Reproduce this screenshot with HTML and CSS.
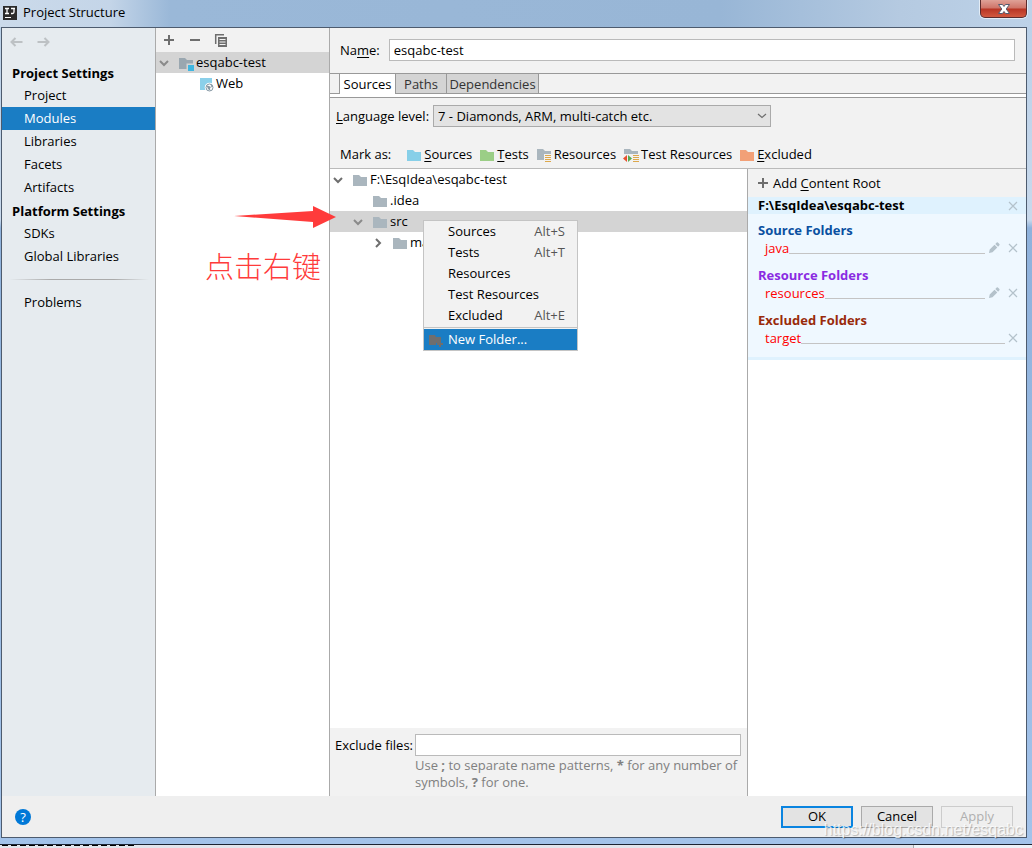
FILE: index.html
```
<!DOCTYPE html>
<html lang="en">
<head>
<meta charset="utf-8">
<title>Project Structure</title>
<link rel="stylesheet" href="styles.css">
</head>
<body>
<svg class="defs" aria-hidden="true">
  <symbol id="folder" viewBox="0 0 16 16"><path d="M1 3h6l2 2h6v9H1z" fill="currentColor"/></symbol>
  <symbol id="chevron" viewBox="0 0 10 10"><path d="M1 3l4 4 4-4" fill="none" stroke="currentColor" stroke-width="2"/></symbol>
  <symbol id="cross" viewBox="0 0 10 10"><path d="M1 1l8 8M9 1l-8 8" fill="none" stroke="currentColor" stroke-width="1.2"/></symbol>
  <symbol id="pencil" viewBox="0 0 12 12"><path d="M1 11l.700-3.500L6.500 2.700l2.800 2.800L4.500 10.300zM7.300 1.900L8.700.600q.600-.500 1.200 0L11.400 2.100q.500.600 0 1.200L10.100 4.700z" fill="currentColor"/></symbol>
  <symbol id="plus" viewBox="0 0 10 10"><path d="M5 0v10M0 5h10" fill="none" stroke="currentColor" stroke-width="2"/></symbol>
  <symbol id="arrow-left" viewBox="0 0 14 10"><path d="M13 5H2M6 1L2 5l4 4" fill="none" stroke="currentColor" stroke-width="2"/></symbol>
</svg>
<div class="window">
  <header class="titlebar">
    <svg class="app-icon" viewBox="0 0 14 14"><path d="M0 0h14v14H0z" fill="#2b2b2b"/><path d="M2 2.500h4M4 2.500v5M2 7.500h4M8 2.500h4M11 2.500v3.500q0 1.500-1.500 1.500H8" fill="none" stroke="#fff" stroke-width="1.300"/><path d="M2 11h6v1H2z" fill="#fff"/></svg>
    <h1 class="title">Project Structure</h1>
    <button class="close" aria-label="Close"><svg viewBox="0 0 12 10"><path d="M.500.500h4L6 2.500 7.500.500h4L8.200 5l3.300 4.500h-4L6 7.500 4.500 9.500h-4L3.800 5z" fill="#fff" stroke="#555b6e"/></svg></button>
  </header>

  <div class="client">
    <div class="columns">
      <nav class="sidebar">
        <div class="history">
          <button aria-label="Back"><svg><use href="#arrow-left"/></svg></button>
          <button aria-label="Forward" class="forward"><svg><use href="#arrow-left"/></svg></button>
        </div>
        <h2>Project Settings</h2>
        <a href="#project">Project</a>
        <a href="#modules" class="current">Modules</a>
        <a href="#libraries">Libraries</a>
        <a href="#facets">Facets</a>
        <a href="#artifacts">Artifacts</a>
        <h2>Platform Settings</h2>
        <a href="#sdks">SDKs</a>
        <a href="#global">Global Libraries</a>
        <hr>
        <a href="#problems">Problems</a>
      </nav>

      <section class="modules">
        <div class="toolbar">
          <button aria-label="Add"><svg viewBox="0 0 14 14"><path d="M7 2v10M2 7h10" stroke="#6e6e6e" stroke-width="2"/></svg></button>
          <button aria-label="Remove"><svg viewBox="0 0 14 14"><path d="M2 7h10" stroke="#6e6e6e" stroke-width="2"/></svg></button>
          <button aria-label="Copy"><svg viewBox="0 0 14 14"><path d="M1.700 11V1.700H10" fill="none" stroke="#6e6e6e" stroke-width="1.500"/><path d="M4 4h9v10H4z" fill="#6e6e6e"/><path d="M5.500 6.500h6M5.500 9h6M5.500 11.500h6" stroke="#f2f2f2"/></svg></button>
        </div>
        <div class="row selected">
          <svg class="chev"><use href="#chevron"/></svg>
          <svg class="icon module-icon" viewBox="0 0 16 16"><path d="M1 3h6l2 2h6v9H1z" fill="#9aa7b0"/><path d="M8.500 8.500H16V16H8.500z" fill="#d4d4d4"/><path d="M10 10h6v6h-6z" fill="#40b6e0"/></svg>
          <span>esqabc-test</span>
        </div>
        <div class="row web">
          <svg class="icon" viewBox="0 0 16 16"><path d="M2 2h12v12H2z" fill="#8bd0ea"/><circle cx="11.500" cy="11.500" r="4.800" fill="#fff"/><circle cx="11.500" cy="11.500" r="3.500" fill="none" stroke="#8799a5"/><path d="M8.500 9.500l2.500.500 2 1-1 1.500.500 2.500-2.500-2zM12.500 8l2.500 2.500-1.500 1z" fill="#8799a5"/></svg>
          <span>Web</span>
        </div>
      </section>

      <main class="editor">
        <div class="name-row">
          <label for="name">Na<u>m</u>e:</label>
          <input id="name" type="text" value="esqabc-test">
        </div>
        <div class="tabs" role="tablist">
          <button role="tab" aria-selected="true" class="active">Sources</button>
          <button role="tab" class="paths">Paths</button>
          <button role="tab" class="dependencies">Dependencies</button>
        </div>
        <div class="level-row">
          <label for="level"><u>L</u>anguage level:</label>
          <div class="combo">
            <select id="level"><option>7 - Diamonds, ARM, multi-catch etc.</option></select>
            <svg viewBox="0 0 10 6"><path d="M1 1l4 3.500L9 1" fill="none" stroke="#6e6e6e" stroke-width="1.200"/></svg>
          </div>
        </div>
        <div class="mark-row">
          <span class="mark-label">Mark as:</span>
          <button><svg class="icon blue"><use href="#folder"/></svg><span><u>S</u>ources</span></button>
          <button><svg class="icon green"><use href="#folder"/></svg><span><u>T</u>ests</span></button>
          <button><svg class="icon" viewBox="0 0 16 16"><path d="M1 2h6l2 2h6v3H8v6H1z" fill="#aab6be"/><path d="M9 8.500H15M9 10.500H15M9 12.500H15M9 14.500H15" stroke="#dda84c"/></svg><span>Resources</span></button>
          <button><svg class="icon" viewBox="0 0 16 16"><path d="M1 2h6l2 2h6v3H1z" fill="#aab6be"/><path d="M4 8v7L0 11.500z" fill="#e8502f"/><path d="M5 8v7l4-3.500z" fill="#5aa84f"/><path d="M10 8.500h6M10 10.500h6M10 12.500h6M10 14.500h6" stroke="#dda84c"/></svg><span>Test Resources</span></button>
          <button><svg class="icon orange"><use href="#folder"/></svg><span><u>E</u>xcluded</span></button>
        </div>

        <div class="split">
          <section class="content-tree">
            <div class="tree">
              <div class="row"><svg class="chev"><use href="#chevron"/></svg><svg class="icon"><use href="#folder"/></svg><span>F:\EsqIdea\esqabc-test</span></div>
              <div class="row level-1"><svg class="chev hidden"><use href="#chevron"/></svg><svg class="icon"><use href="#folder"/></svg><span>.idea</span></div>
              <div class="row level-1 selected"><svg class="chev"><use href="#chevron"/></svg><svg class="icon"><use href="#folder"/></svg><span>src</span>
                <svg class="pointer" viewBox="0 0 102 24"><path d="M0 11L79 6V1l23 11-23 11v-6z" fill="#ff3b3b"/></svg>
                <div class="menu" role="menu">
                  <button role="menuitem"><span>Sources</span><kbd>Alt+S</kbd></button>
                  <button role="menuitem"><span>Tests</span><kbd>Alt+T</kbd></button>
                  <button role="menuitem"><span>Resources</span></button>
                  <button role="menuitem"><span>Test Resources</span></button>
                  <button role="menuitem"><span>Excluded</span><kbd>Alt+E</kbd></button>
                  <hr>
                  <button role="menuitem" class="highlight"><svg viewBox="0 0 16 16"><path d="M1 3h6l1 2h5v4h-2v2H8v2H1z" fill="#6e6e6e"/><path d="M12 9v6M9 12h6" stroke="#6e6e6e" stroke-width="2"/></svg><span>New Folder...</span></button>
                </div>
              </div>
              <div class="row level-2"><svg class="chev closed"><use href="#chevron"/></svg><svg class="icon"><use href="#folder"/></svg><span>main</span></div>
              <p class="note" lang="zh">点击右键</p>
            </div>
            <div class="exclude">
              <label for="exclude">Exclude files:</label>
              <input id="exclude" type="text">
              <p>Use <b>;</b> to separate name patterns, <b>*</b> for any number of symbols, <b>?</b> for one.</p>
            </div>
          </section>

          <aside class="roots">
            <button class="add-root"><svg><use href="#plus"/></svg><span>Add <u>C</u>ontent Root</span></button>
            <div class="root-head"><h3>F:\EsqIdea\esqabc-test</h3><button aria-label="Remove root"><svg><use href="#cross"/></svg></button></div>
            <div class="root-body">
              <h4 class="source">Source Folders</h4>
              <div class="entry"><span>java</span><i></i><button aria-label="Edit java"><svg class="pencil"><use href="#pencil"/></svg></button><button aria-label="Remove java"><svg><use href="#cross"/></svg></button></div>
              <h4 class="resource">Resource Folders</h4>
              <div class="entry"><span>resources</span><i></i><button aria-label="Edit resources"><svg class="pencil"><use href="#pencil"/></svg></button><button aria-label="Remove resources"><svg><use href="#cross"/></svg></button></div>
              <h4 class="excluded">Excluded Folders</h4>
              <div class="entry"><span>target</span><i></i><button aria-label="Remove target"><svg><use href="#cross"/></svg></button></div>
            </div>
          </aside>
        </div>
      </main>
    </div>

    <footer class="footer">
      <button class="help" aria-label="Help">?</button>
      <button class="btn default">OK</button>
      <button class="btn">Cancel</button>
      <button class="btn" disabled>Apply</button>
    </footer>
  </div>
</div>
<div class="desktop"><i class="dashes"></i><i class="pane"></i></div>
<div class="watermark">https://blog.csdn.net/esqabc</div>
</body>
</html>
```

FILE: styles.css
```
* { box-sizing: border-box; }

body {
  margin: 0;
  min-height: 100vh;
  display: flex;
  flex-direction: column;
  position: relative;
  overflow: hidden;
  font: 13px/17px "Open Sans", "Noto Sans", "Noto Sans CJK SC", sans-serif;
  color: #000;
}

button, input, select { font: inherit; color: inherit; }
button { padding: 0; border: 0; background: none; white-space: nowrap; }
svg { display: block; flex: none; }
h1, h2, h3, h4, p { margin: 0; font-size: inherit; }
u { text-underline-offset: 2px; }
.defs { position: absolute; width: 0; height: 0; }

.window {
  flex: 1;
  display: flex;
  flex-direction: column;
  padding: 0 5px 6px 1px;
  border-bottom: 1px solid #1d2433;
  background: linear-gradient(#b9d0e8, #c8d9ec 220px, #8fb2dc 228px, #a3c3ea);
}

.titlebar {
  display: flex;
  align-items: center;
  height: 27px;
  gap: 6px;
  margin: 0 -5px 0 -1px;
  padding: 0 5px 2px 3px;
  background: linear-gradient(90deg, #cbdaea, #c4d5e8 110px, #9ab8d8 170px, #98b6d6 720px, #b5cae1 900px, #bdd2e8);
}
.app-icon { width: 14px; height: 14px; }
.title { flex: 1; font-weight: 400; }
.close {
  display: grid;
  place-items: center;
  align-self: flex-start;
  width: 47px;
  height: 18px;
  border: 1px solid #5b2b2c;
  border-top: 0;
  border-radius: 0 0 5px 5px;
  background: linear-gradient(#dfa197, #cf7468 8px, #b83524 9px, #d2593f);
  box-shadow: 0 0 0 1px #e3ecf5;
}
.close svg { width: 12px; height: 10px; }

.client {
  flex: 1;
  display: flex;
  flex-direction: column;
  border: 1px solid #4d5b6e;
  background: #efefef;
}
.columns { flex: 1; display: flex; }

.sidebar {
  display: flex;
  flex-direction: column;
  width: 154px;
  border-right: 1px solid #aaa;
  background: #e6ebef;
}
.history { display: flex; gap: 12px; padding: 9px 7px; margin-bottom: 5px; color: #bdc1c4; }
.history svg { width: 15px; height: 10px; }
.history .forward { transform: scaleX(-1); }
.sidebar h2 { padding: 1px 0 0 10px; font-weight: 700; line-height: 22px; }
.sidebar a { padding-left: 22px; line-height: 23px; color: inherit; text-decoration: none; }
.sidebar .current { background: #1a7dc4; color: #fff; }
.sidebar hr {
  width: 140px;
  height: 1px;
  margin: 11px 7px;
  border: 0;
  background: linear-gradient(90deg, transparent, #aaa 30%, #aaa 75%, transparent);
}

.modules { width: 174px; border-right: 1px solid #aaa; background: #fff; }
.toolbar { display: flex; gap: 12px; height: 24px; padding: 0 6px; background: #f2f2f2; }
.toolbar svg { width: 14px; height: 14px; }

.row { display: flex; align-items: center; height: 21px; padding-left: 3px; }
.row .chev { width: 10px; height: 10px; margin-right: 9px; color: #6e6e6e; }
.row .closed { transform: rotate(-90deg); }
.row .hidden { visibility: hidden; }
.row.selected { background: #d4d4d4; }
.row.selected .chev { color: #8a8a8a; }
.icon { width: 16px; height: 16px; margin-right: 2px; color: #aab6be; }
.row.web { padding-left: 42px; }

.editor { flex: 1; min-width: 0; display: flex; flex-direction: column; background: #f2f2f2; }
input {
  height: 22px;
  padding: 0 4px;
  border: 1px solid #bababa;
  border-radius: 0;
  background: #fff;
}
.name-row { display: flex; align-items: center; gap: 9px; padding: 11px 11px 12px 10px; }
.name-row input { flex: 1; min-width: 0; }

.tabs {
  display: flex;
  height: 25px;
  padding-left: 9px;
  border: solid #999;
  border-width: 1px 0;
  background: linear-gradient(#f2f2f2 19px, #999 19px, #999 20px, #fff 20px);
}
.tabs button {
  height: 20px;
  padding: 1px 0 0;
  border: solid #999;
  border-width: 0 1px 1px 0;
  background: #d4d4d4;
  color: #333;
}
.tabs .active { width: 57px; height: 20px; border-left-width: 1px; border-bottom: 0; background: #fff; color: #000; }
.tabs .paths { width: 51px; }
.tabs .dependencies { width: 92px; }

.level-row { display: flex; align-items: center; gap: 4px; padding: 7px 6px 0; }
.combo { position: relative; width: 338px; }
.combo select {
  display: block;
  width: 100%;
  height: 22px;
  padding: 0 4px;
  border: 1px solid #aaa;
  border-radius: 0;
  background: #e3e3e3;
  appearance: none;
}
.combo svg { position: absolute; right: 4px; top: 8px; width: 10px; height: 6px; }

.mark-row {
  display: flex;
  align-items: center;
  gap: 7px;
  height: 42px;
  padding: 14px 10px 0;
  border-bottom: 1px solid #bababa;
}
.mark-label { margin-right: 8px; }
.mark-row button { display: flex; align-items: center; }
.icon.blue { color: #87cfe8; }
.icon.green { color: #9bce86; }
.icon.orange { color: #f2a077; }

.split { flex: 1; display: flex; }
.content-tree { flex: 3; display: flex; flex-direction: column; min-width: 0; border-right: 1px solid #aaa; }
.tree { flex: 1; position: relative; background: #fff; }
.tree .level-1 { position: relative; padding-left: 23px; }
.tree .level-2 { padding-left: 43px; }

.menu {
  position: absolute;
  z-index: 2;
  left: 93px;
  top: 9px;
  width: 155px;
  border: 1px solid #c4c4c4;
  background: #f2f2f2;
}
.menu button {
  position: relative;
  display: flex;
  justify-content: space-between;
  align-items: center;
  width: 100%;
  height: 21px;
  padding: 0 12px 0 24px;
}
.menu kbd { font: inherit; color: #555; }
.menu hr { height: 1px; margin: 1px 0; border: 0; background: #c4c4c4; }
.menu .highlight { background: #1a7dc4; color: #fff; }
.menu svg { position: absolute; left: 4px; top: 3px; width: 16px; height: 16px; }

.pointer { position: absolute; z-index: 1; left: -96px; top: -6px; width: 102px; height: 24px; }
.note {
  position: absolute;
  left: -125px;
  top: 76px;
  font: 29px/40px "Noto Sans CJK SC", sans-serif;
  font-weight: 300;
  color: #ff3b3b;
}

.exclude {
  display: grid;
  grid-template-columns: auto 1fr;
  align-items: center;
  column-gap: 2px;
  padding: 6px 6px 5px 5px;
}
.exclude p { grid-column: 2; padding-top: 1px; color: #808080; }

.roots { flex: 2; max-width: 278px; background: #fff; }
.add-root { display: flex; align-items: center; gap: 5px; width: 100%; height: 28px; padding-left: 10px; background: #f2f2f2; }
.add-root svg { width: 10px; height: 10px; color: #6e6e6e; }
.roots svg { width: 10px; height: 10px; }
.root-head { display: flex; justify-content: space-between; align-items: center; height: 17px; padding: 0 8px 0 10px; background: #dff2fe; }
.root-head button, .entry button { color: #b4c2cb; }
.root-body { padding: 8px 8px 8px 10px; border-bottom: 3px solid #dff2fe; background: #eff8ff; }
.root-body h4 { line-height: 17px; }
.root-body .source { color: #0a50a1; }
.root-body .resource { color: #8a2be2; }
.root-body .excluded { color: #992a0b; }
.entry { display: flex; align-items: center; height: 18px; margin-bottom: 10px; padding-left: 7px; color: #f00; }
.entry:last-child { margin-bottom: 2px; }
.entry i { flex: 1; height: 1px; margin: 11px 3px 0 0; background: #c4c4c4; }
.entry .pencil { width: 12px; height: 12px; margin-right: 8px; }

.footer { display: flex; align-items: center; gap: 8px; height: 41px; padding: 0 13px; }
.help { width: 16px; height: 16px; margin-right: auto; border-radius: 50%; background: #0078d7; color: #fff; line-height: 16px; }
.btn { width: 72px; height: 22px; border: 1px solid #aaa; background: #e3e3e3; }
.btn.default { border: 2px solid #0a84e0; }
.btn:disabled { border-color: #ccc; background: #efefef; color: #b0b0b0; }

.desktop { display: flex; justify-content: space-between; height: 3px; background: #e3e5ec; }
.dashes { width: 135px; height: 1px; background: repeating-linear-gradient(90deg, transparent 0 2px, #000 2px 8px, transparent 8px 9px); }
.pane { width: 119px; border-left: 1px solid #aaa; background: #eef2f8; }

.watermark {
  position: absolute;
  right: 9px;
  bottom: 9px;
  font: 16px/18px "Liberation Sans", sans-serif;
  color: rgba(255, 255, 255, .8);
  text-shadow: 1px 1px 1px rgba(0, 0, 0, .25);
  pointer-events: none;
}
```
